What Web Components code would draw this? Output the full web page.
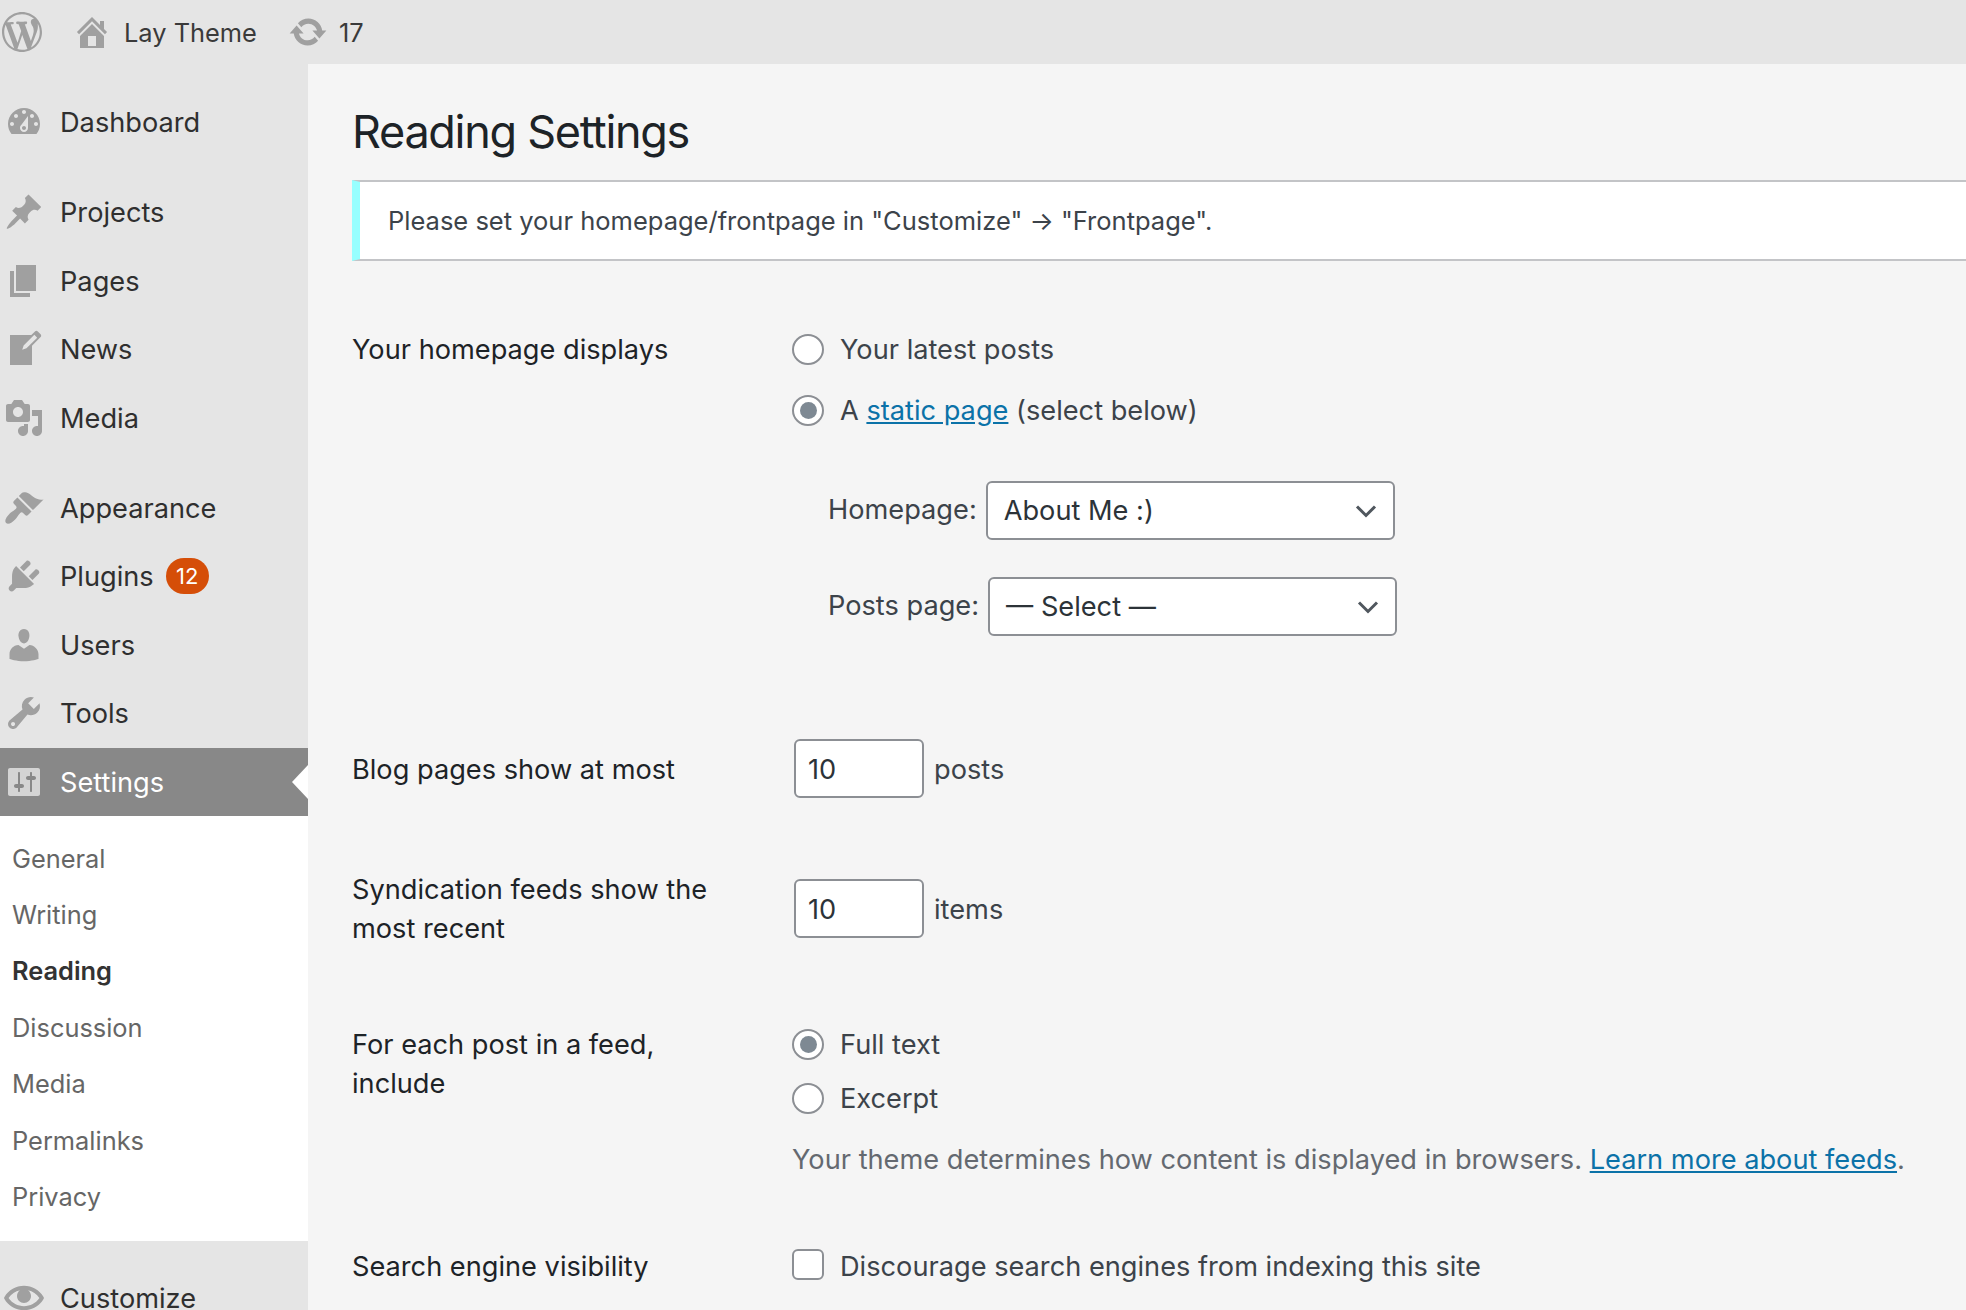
<!DOCTYPE html>
<html lang="en"><head><meta charset="utf-8"><title>Reading Settings</title>
<style>
html,body{margin:0;padding:0;height:1310px;overflow:hidden;background:#f5f5f5;font-family:Inter,"Liberation Sans",sans-serif;font-size:27.2px;color:#1d2327}
wp-title{margin-top:40px}
wp-notice{margin-top:20px}
.s1{margin-top:69px;--label-top:0px}
.s2{margin-top:103px;--label-top:11px}
.s3{margin-top:72px;--control-top:9px}
.s4{margin-top:77px}
.s5{margin-top:68px}
a{color:#0b72a8}
</style></head><body>
<wp-app>
  <wp-topbar slot="top"></wp-topbar>
  <wp-sidebar slot="side">
    <wp-menu-item icon="dashboard">Dashboard</wp-menu-item>
    <wp-sep></wp-sep>
    <wp-menu-item icon="pin">Projects</wp-menu-item>
    <wp-menu-item icon="page">Pages</wp-menu-item>
    <wp-menu-item icon="write">News</wp-menu-item>
    <wp-menu-item icon="media">Media</wp-menu-item>
    <wp-sep></wp-sep>
    <wp-menu-item icon="appearance">Appearance</wp-menu-item>
    <wp-menu-item icon="plugins" badge="12">Plugins</wp-menu-item>
    <wp-menu-item icon="users">Users</wp-menu-item>
    <wp-menu-item icon="tools">Tools</wp-menu-item>
    <wp-menu-item icon="settings" current>Settings</wp-menu-item>
    <wp-submenu>
      <wp-sub-item>General</wp-sub-item>
      <wp-sub-item>Writing</wp-sub-item>
      <wp-sub-item current>Reading</wp-sub-item>
      <wp-sub-item>Discussion</wp-sub-item>
      <wp-sub-item>Media</wp-sub-item>
      <wp-sub-item>Permalinks</wp-sub-item>
      <wp-sub-item>Privacy</wp-sub-item>
    </wp-submenu>
    <wp-sep style="height:23px"></wp-sep>
    <wp-menu-item icon="eye">Customize</wp-menu-item>
  </wp-sidebar>
  <wp-title>Reading Settings</wp-title>
  <wp-notice>Please set your homepage/frontpage in "Customize" → "Frontpage".</wp-notice>

  <wp-setting class="s1" label="Your homepage displays">
    <wp-radio>Your latest posts</wp-radio>
    <wp-radio checked style="margin-top:22px">A <a href="#">static page</a> (select below)</wp-radio>
    <wp-select-row label="Homepage:" value="About Me :)" style="margin-top:51px"></wp-select-row>
    <wp-select-row label="Posts page:" value="— Select —" style="margin-top:37px"></wp-select-row>
  </wp-setting>
  <wp-setting class="s2" label="Blog pages show at most">
    <wp-number value="10" unit="posts"></wp-number>
  </wp-setting>
  <wp-setting class="s3" label="Syndication feeds show the most recent">
    <wp-number value="10" unit="items"></wp-number>
  </wp-setting>
  <wp-setting class="s4" label="For each post in a feed, include">
    <wp-radio checked>Full text</wp-radio>
    <wp-radio style="margin-top:14.5px">Excerpt</wp-radio>
    <wp-desc style="margin-top:22px">Your theme determines how content is displayed in browsers. <a href="#">Learn more about feeds</a>.</wp-desc>
  </wp-setting>
  <wp-setting class="s5" label="Search engine visibility">
    <wp-check>Discourage search engines from indexing this site</wp-check>
  </wp-setting>
</wp-app>
<script>
const P={
logo:"M20 10c0-5.51-4.49-10-10-10C4.48 0 0 4.49 0 10c0 5.52 4.48 10 10 10 5.51 0 10-4.48 10-10zM7.78 15.37L4.37 6.22c.55-.02 1.17-.08 1.17-.08.5-.06.44-1.13-.06-1.11 0 0-1.45.11-2.37.11-.18 0-.37 0-.58-.01C4.12 2.69 6.87 1.07 10 1.07c2.33 0 4.45.87 6.05 2.34-.68-.11-1.65.39-1.65 1.58 0 .74.45 1.36.9 2.1.35.61.55 1.36.55 2.46 0 1.49-1.4 5-1.4 5l-3.03-8.37c.54-.02.82-.17.82-.17.5-.05.44-1.25-.06-1.22 0 0-1.44.12-2.38.12-.87 0-2.33-.12-2.33-.12-.5-.03-.56 1.2-.06 1.22l.92.08 1.26 3.41zM17.41 10c.24-.64.74-1.87.43-4.25.7 1.29 1.05 2.71 1.05 4.25 0 3.29-1.73 6.24-4.4 7.78.97-2.59 1.94-5.2 2.92-7.78zM6.1 18.09C3.12 16.65 1.11 13.53 1.11 10c0-1.3.23-2.48.72-3.59C3.25 10.3 4.67 14.2 6.1 18.09zm4.03-6.63l2.58 6.98c-.86.29-1.76.45-2.71.45-.79 0-1.57-.11-2.29-.33.81-2.38 1.62-4.74 2.42-7.1z",
home:"M16 8.5l1.53 1.53-1.06 1.06L10 4.62l-6.47 6.47-1.06-1.06L10 2.5l4 4v-2h2v4zm-6-2.46l6 5.99V18H4v-5.97zM12 17v-5H8v5h4z",
update:"M10.2 3.28c3.53 0 6.43 2.61 6.92 6h2.08l-3.5 4-3.5-4h2.32c-.45-1.97-2.21-3.45-4.32-3.45-1.45 0-2.73.71-3.54 1.78L4.95 5.66C6.23 4.2 8.11 3.28 10.2 3.28zm-.4 13.44c-3.52 0-6.43-2.61-6.92-6H.8l3.5-4c1.17 1.33 2.33 2.67 3.5 4H5.48c.45 1.97 2.21 3.45 4.32 3.45 1.45 0 2.73-.71 3.54-1.78l1.71 1.95c-1.28 1.46-3.15 2.38-5.25 2.38z",
dashboard:"M3.76 16h12.48c1.1-1.37 1.76-3.11 1.76-5 0-4.42-3.58-8-8-8s-8 3.58-8 8c0 1.89.66 3.63 1.76 5zM10 4c.55 0 1 .45 1 1s-.45 1-1 1-1-.45-1-1 .45-1 1-1zM6 6c.55 0 1 .45 1 1s-.45 1-1 1-1-.45-1-1 .45-1 1-1zm8 0c.55 0 1 .45 1 1s-.45 1-1 1-1-.45-1-1 .45-1 1-1zm-5.37 5.55L12 7v6c0 1.1-.9 2-2 2s-2-.9-2-2c0-.57.24-1.08.63-1.45zM4 10c.55 0 1 .45 1 1s-.45 1-1 1-1-.45-1-1 .45-1 1-1zm12 0c.55 0 1 .45 1 1s-.45 1-1 1-1-.45-1-1 .45-1 1-1zm-5 3c0-.55-.45-1-1-1s-1 .45-1 1 .45 1 1 1 1-.45 1-1z",
pin:"M10.44 3.02l1.82-1.82 6.36 6.35-1.83 1.82c-1.05-.68-2.48-.57-3.41.36l-.75.75c-.92.93-1.04 2.35-.35 3.41l-1.83 1.82-2.41-2.41-2.8 2.79c-.42.42-3.38 2.71-3.8 2.29s1.86-3.39 2.28-3.81l2.79-2.79L4.1 9.36l1.83-1.82c1.05.69 2.48.57 3.4-.36l.75-.75c.93-.92 1.05-2.35.36-3.41z",
page:"M6 15V2h10v13H6zm-1 1h8v2H3V5h2v11z",
write:"M16.89 1.2l1.41 1.41c.39.39.39 1.02 0 1.41L14 8.33V18H3V3h10.67l1.8-1.8c.4-.39 1.03-.4 1.42 0zm-5.66 8.48l5.37-5.36-1.42-1.42-5.36 5.37-.71 2.12z",
media:"M13 11V4c0-.55-.45-1-1-1h-1.67L9 1H5L3.67 3H2c-.55 0-1 .45-1 1v7c0 .55.45 1 1 1h10c.55 0 1-.45 1-1zM7 4.5c1.38 0 2.5 1.12 2.5 2.5S8.38 9.5 7 9.5 4.5 8.38 4.5 7 5.62 4.5 7 4.5zM14 6h5v10.5c0 1.38-1.12 2.5-2.5 2.5S14 17.88 14 16.5s1.12-2.5 2.5-2.5c.17 0 .34.02.5.05V9h-3V6zm-4 8.05V13h2v3.5c0 1.38-1.12 2.5-2.5 2.5S7 17.88 7 16.5 8.12 14 9.5 14c.17 0 .34.02.5.05z",
appearance:"M14.48 11.06L7.41 3.99l1.5-1.5c.5-.56 2.3-.47 3.51.32 1.21.8 1.43 1.28 2.91 2.1 1.18.64 2.45 1.26 4.45.85zm-.71.71L6.7 4.7 4.93 6.47c-.39.39-.39 1.02 0 1.41l1.06 1.06c.39.39.39 1.03 0 1.42-.6.6-1.43 1.11-2.21 1.69-.35.26-.7.53-1.01.84C1.43 14.23-.1 16.4 1.05 17.55 2.2 18.7 4.24 17.04 5.58 15.7c.31-.31.58-.66.84-1.01.58-.78 1.09-1.61 1.69-2.21.39-.39 1.03-.39 1.42 0l1.06 1.06c.39.39 1.02.39 1.41 0z",
plugins:"M13.11 4.36L9.87 7.6 8 5.73l3.24-3.24c.35-.34 1.05-.2 1.56.32.52.51.66 1.21.31 1.55zm-8 1.77l.91-1.12 9.01 9.01-1.19.84c-.71.71-2.63 1.16-3.82 1.16H6.14L4.9 17.26c-.59.59-1.54.59-2.12 0-.59-.58-.59-1.53 0-2.12l1.24-1.24v-3.88c0-1.13.4-3.19 1.09-3.89zm7.26 3.97l3.24-3.24c.34-.35 1.04-.21 1.55.31.52.51.66 1.21.31 1.55l-3.24 3.25z",
users:"M10 9.25c-2.27 0-2.73-3.44-2.73-3.44C7 4.02 7.82 2 9.97 2c2.16 0 2.98 2.02 2.71 3.81 0 0-.41 3.44-2.68 3.44zm0 2.57L12.72 10c2.39 0 4.52 2.33 4.52 4.53v2.49s-3.65 1.13-7.24 1.13c-3.65 0-7.24-1.13-7.24-1.13v-2.49c0-2.25 1.94-4.48 4.47-4.48z",
tools:"M16.68 9.77c-1.34 1.34-3.3 1.67-4.95.99l-5.41 6.52c-.99.99-2.59.99-3.58 0s-.99-2.59 0-3.57l6.52-5.42c-.68-1.65-.35-3.61.99-4.95 1.28-1.28 3.12-1.62 4.72-1.06l-2.89 2.89 2.82 2.82 2.86-2.87c.53 1.58.18 3.39-1.08 4.65zM3.81 16.21c.4.39 1.04.39 1.43 0 .4-.4.4-1.04 0-1.43-.39-.4-1.03-.4-1.43 0-.39.39-.39 1.03 0 1.43z",
settings:"M18 16V4c0-.55-.45-1-1-1H3c-.55 0-1 .45-1 1v12c0 .55.45 1 1 1h14c.55 0 1-.45 1-1zM8 11h1c.55 0 1 .45 1 1s-.45 1-1 1H8v1.5c0 .28-.22.5-.5.5s-.5-.22-.5-.5V13H6c-.55 0-1-.45-1-1s.45-1 1-1h1V5.5c0-.28.22-.5.5-.5s.5.22.5.5V11zm5-2h-1c-.55 0-1-.45-1-1s.45-1 1-1h1V5.5c0-.28.22-.5.5-.5s.5.22.5.5V7h1c.55 0 1 .45 1 1s-.45 1-1 1h-1v5.5c0 .28-.22.5-.5.5s-.5-.22-.5-.5V9z",
eye:"M19.7 9.4C17.7 6 14 3.9 10 3.9S2.3 6 .3 9.4L0 10l.3.6c2 3.4 5.7 5.5 9.7 5.5s7.7-2.1 9.7-5.5l.3-.6-.3-.6zM10 14.1c-3.1 0-6-1.6-7.7-4.1C3.6 8 5.7 6.6 8 6.1c-.9.6-1.5 1.7-1.5 2.9 0 1.9 1.6 3.5 3.5 3.5s3.5-1.6 3.5-3.5c0-1.2-.6-2.3-1.5-2.9 2.3.5 4.4 1.9 5.7 3.9-1.7 2.5-4.6 4.1-7.7 4.1z"
};
const ic=(n,s=40,c='currentColor')=>`<svg width="${s}" height="${s}" viewBox="0 0 20 20" fill="${c}" aria-hidden="true" style="display:block;flex:none"><path fill-rule="evenodd" d="${P[n]}"/></svg>`;
function def(name,render){
  customElements.define(name,class extends HTMLElement{
    constructor(){super();this.attachShadow({mode:'open'});}
    connectedCallback(){this.shadowRoot.innerHTML=render(this);}
  });
}
def('wp-app',()=>`<style>
:host{display:grid;grid-template-columns:308px 1fr;grid-template-rows:64px 1246px;width:1966px;height:1310px;overflow:hidden}
.top{grid-column:1/3}
.main{display:flex;flex-direction:column;padding-left:44px;overflow:hidden;background:#f5f5f5}
</style><div class="top"><slot name="top"></slot></div><div><slot name="side"></slot></div><div class="main"><slot></slot></div>`);
def('wp-topbar',()=>`<style>
:host{display:flex;align-items:center;height:64px;background:#e5e5e5;color:#3a3a3a;font-size:25.4px}
.i{color:#a0a0a0}
.logo{margin-left:2px}.home{margin-left:30px}.t{margin-left:12px;padding-top:1px}.up{margin-left:31px}.n{margin-left:11px;padding-top:1px}
</style><span class="i logo">${ic('logo')}</span><span class="i home">${ic('home')}</span><span class="t">Lay Theme</span><span class="i up">${ic('update')}</span><span class="n">17</span>`);
def('wp-sidebar',()=>`<style>:host{display:flex;flex-direction:column;box-sizing:border-box;height:1246px;padding-top:24px;background:#e5e5e5;overflow:hidden}</style><slot></slot>`);
def('wp-sep',()=>`<style>:host{display:block;height:21.5px;flex:none}</style>`);
def('wp-menu-item',e=>{
 const cur=e.hasAttribute('current');const b=e.getAttribute('badge');
 return `<style>
:host{display:flex;align-items:center;flex:none;height:68.5px;position:relative;font-size:27.2px;color:${cur?'#fff':'#2f2f2f'};background:${cur?'#888':'transparent'}}
.i{margin-left:4px;color:${cur?'#d4d4d4':'#a0a0a0'}}
.t{margin-left:16px;padding-top:1px}
.b{margin-left:12px;min-width:43px;height:36px;border-radius:18px;background:#d54e08;color:#fff;font-size:22px;display:flex;align-items:center;justify-content:center}
.a{position:absolute;right:0;top:50%;margin-top:-17px;width:0;height:0;border:17px solid transparent;border-left:0;border-right:16px solid #fff}
</style><span class="i">${ic(e.getAttribute('icon'))}</span><span class="t"><slot></slot></span>${b?`<span class="b">${b}</span>`:''}${cur?'<span class="a"></span>':''}`});
def('wp-submenu',()=>`<style>:host{display:flex;flex-direction:column;flex:none;padding:14px 0 16px;background:#fff}</style><slot></slot>`);
def('wp-sub-item',e=>{const c=e.hasAttribute('current');return `<style>:host{display:flex;align-items:center;height:56.4px;padding-left:12px;font-size:25.4px;color:${c?'#333':'#666'};font-weight:${c?600:400}}</style><slot></slot>`});
def('wp-title',()=>`<style>:host{display:block;flex:none;font-size:45px;letter-spacing:-1.3px;line-height:56px;font-weight:400;color:#1d2327}</style><slot></slot>`);
def('wp-notice',()=>`<style>:host{display:flex;align-items:center;flex:none;box-sizing:border-box;height:81px;background:#fff;border:2px solid #c3c4c7;border-left:8px solid #97ffff;border-right:0;padding-left:28px;font-size:25.5px;color:#3c434a}</style><slot></slot>`);
def('wp-setting',e=>`<style>
:host{display:grid;grid-template-columns:440px 1fr;flex:none}
.l{padding-top:var(--label-top,0);width:360px;line-height:39px;font-size:27.2px;color:#1d2327}
.c{padding-top:var(--control-top,0);display:flex;flex-direction:column;align-items:flex-start}
</style><div class="l">${e.getAttribute('label')}</div><div class="c"><slot></slot></div>`);
def('wp-radio',e=>`<style>
:host{display:flex;align-items:center;height:39px;color:#3c434a;font-size:27.2px;white-space:pre}
.r{box-sizing:border-box;width:32px;height:31px;flex:none;margin-right:16px;border:2px solid #8c8f94;border-radius:50%;background:#fff;display:flex;align-items:center;justify-content:center}
.d{width:17px;height:17px;border-radius:50%;background:#7e8993}
::slotted(a){color:#0b72a8}
</style><span class="r">${e.hasAttribute('checked')?'<span class="d"></span>':''}</span><span><slot></slot></span>`);
def('wp-check',()=>`<style>
:host{display:flex;align-items:center;height:39px;color:#3c434a;font-size:27.2px}
.r{box-sizing:border-box;width:32px;height:31px;flex:none;margin-right:16px;margin-top:-4px;border:2px solid #8c8f94;border-radius:6px;background:#fff}
</style><span class="r"></span><span><slot></slot></span>`);
def('wp-select-row',e=>`<style>
:host{display:flex;align-items:center;padding-left:36px;font-size:27.2px;color:#3c434a}
.l{margin-right:9px;margin-top:-2px}
.s{box-sizing:border-box;width:409px;height:59px;display:flex;align-items:center;justify-content:space-between;padding:0 16px 0 16px;background:#fff;border:2px solid #8c8f94;border-radius:6px;color:#2c3338}
svg{display:block}
</style><span class="l">${e.getAttribute('label')}</span><span class="s"><span>${e.getAttribute('value')}</span><svg width="22" height="14" viewBox="0 0 22 14" fill="none" stroke="#50575e" stroke-width="3"><path d="M2 2.500L11 11.500L20 2.500"/></svg></span>`);
def('wp-number',e=>`<style>
:host{display:flex;align-items:center;margin-left:2px;font-size:27.2px;color:#3c434a}
.n{box-sizing:border-box;width:130px;height:59px;display:flex;align-items:center;padding-left:12px;padding-top:1px;background:#fff;border:2px solid #8c8f94;border-radius:6px;color:#2c3338;margin-right:10px}
span:last-child{padding-top:1px}
</style><span class="n">${e.getAttribute('value')}</span><span>${e.getAttribute('unit')}</span>`);
def('wp-desc',()=>`<style>:host{display:block;line-height:39px;font-size:27.2px;color:#646970;white-space:nowrap}</style><slot></slot>`);
</script>
</body></html>
